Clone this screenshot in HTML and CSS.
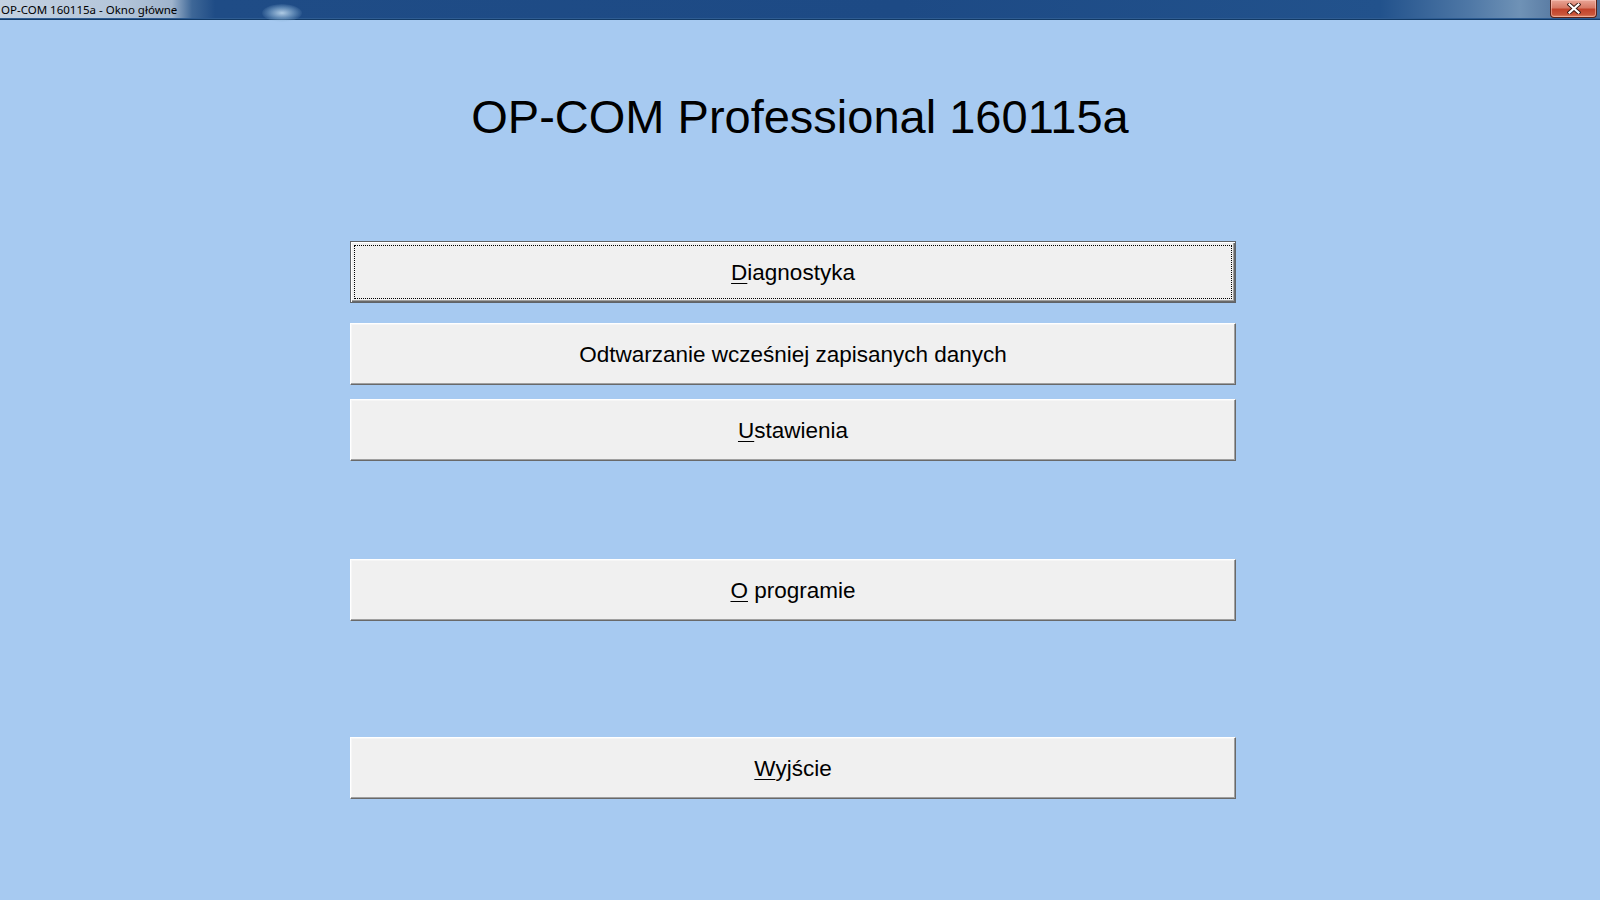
FILE: index.html
```html
<!DOCTYPE html>
<html lang="pl">
<head>
<meta charset="utf-8">
<title>OP-COM 160115a - Okno główne</title>
<link rel="stylesheet" href="styles.css">
</head>
<body>
<div class="titlebar">
  <div class="titlebar-caption">OP-COM 160115a - Okno główne</div>
  <div class="titlebar-glow"></div>
  <div class="titlebar-close">
    <svg width="14" height="11" viewBox="0 0 14 11" aria-hidden="true">
      <path d="M2.5 1.5 L11.5 9.5 M11.5 1.5 L2.5 9.5" stroke="#3a1a14" stroke-width="4" stroke-linecap="square"/>
      <path d="M2.5 1.5 L11.5 9.5 M11.5 1.5 L2.5 9.5" stroke="#ffffff" stroke-width="2.2" stroke-linecap="square"/>
    </svg>
  </div>
</div>
<main class="client">
  <h1 class="app-title">OP-COM Professional 160115a</h1>
  <div class="menu">
    <button class="btn btn-default gap-a"><span class="focus"><span class="label"><u>D</u>iagnostyka</span></span></button>
    <button class="btn gap-b"><span class="focus"><span class="label">Odtwarzanie wcześniej zapisanych danych</span></span></button>
    <button class="btn gap-c"><span class="focus"><span class="label"><u>U</u>stawienia</span></span></button>
    <button class="btn gap-d"><span class="focus"><span class="label"><u>O</u> programie</span></span></button>
    <button class="btn"><span class="focus"><span class="label"><u>W</u>yjście</span></span></button>
  </div>
</main>
</body>
</html>
```
FILE: styles.css
```css
html, body {
  margin: 0;
  padding: 0;
  width: 1600px;
  height: 900px;
  overflow: hidden;
  background: #a7caf1;
  font-family: "Liberation Sans", Arial, sans-serif;
}

.titlebar {
  position: relative;
  height: 20px;
  box-sizing: border-box;
  border-bottom: 1px solid #123a66;
  background:
    linear-gradient(to right,
      #c3d1e1 0px, #b4c6da 120px, #9fb4cc 172px, #3e6797 192px,
      #1f4c86 215px, #1d4a85 900px, #22528c 1380px,
      #4f78a6 1470px, #6f92b6 1520px, #5d7fa6 1548px, #4a6e98 1600px);
  box-shadow: inset 0 -1px 0 #2e5c92;
}

.titlebar-caption {
  padding-left: 1px;
  font-family: "Noto Sans", "DejaVu Sans", sans-serif;
  font-size: 11.5px;
  line-height: 20px;
  color: #000;
  white-space: nowrap;
}

.titlebar-glow {
  position: absolute;
  left: 262px;
  top: 4px;
  width: 40px;
  height: 18px;
  border-radius: 50%;
  background: radial-gradient(ellipse at center, rgba(200,225,245,0.85) 0%, rgba(140,180,215,0.5) 45%, rgba(40,80,130,0) 75%);
}

.titlebar-close {
  position: absolute;
  left: 1550px;
  top: 0;
  width: 47px;
  height: 18px;
  box-sizing: border-box;
  border: 1px solid #5b2318;
  border-top: none;
  border-radius: 0 0 4px 4px;
  background: linear-gradient(to bottom, #e9a596 0%, #d77a66 45%, #c2432b 55%, #c9553a 85%, #e08a68 100%);
  box-shadow: inset 0 0 0 1px rgba(255,210,200,0.5);
  display: flex;
  align-items: center;
  justify-content: center;
}

.client {
  display: flex;
  flex-direction: column;
  align-items: center;
}

.app-title {
  margin: 73px 0 0 0;
  font-weight: normal;
  font-size: 47px;
  line-height: 47px;
  color: #000;
}

.menu {
  margin-top: 101px;
  display: flex;
  flex-direction: column;
  width: 886px;
  margin-left: -14px;
}

.btn {
  height: 62px;
  margin: 0;
  padding: 0;
  box-sizing: border-box;
  background: #f0f0f0;
  border: 1px solid;
  border-color: #ffffff #696969 #696969 #ffffff;
  box-shadow: inset -1px -1px 0 #a0a0a0, inset 1px 1px 0 #f6f6f6;
  font-family: "Liberation Sans", Arial, sans-serif;
  font-size: 22.5px;
  color: #000;
  display: flex;
  align-items: stretch;
  cursor: default;
}

.btn .focus {
  flex: 1;
  display: flex;
  align-items: center;
  justify-content: center;
  margin: 3px;
  border: 1px dotted transparent;
  padding-top: 1px;
}

.btn .label {
  white-space: pre;
}

.btn-default {
  border: 1px solid #5f6368;
  box-shadow: inset 1px 1px 0 #ffffff, inset -1px -1px 0 #696969, inset -2px -2px 0 #a0a0a0;
}

.btn-default .focus {
  border-color: #000;
}

.btn u {
  text-decoration-thickness: 1px;
  text-underline-offset: 3px;
}

.gap-a { margin-bottom: 20px; }
.gap-b { margin-bottom: 14px; }
.gap-c { margin-bottom: 98px; }
.gap-d { margin-bottom: 116px; }
```
